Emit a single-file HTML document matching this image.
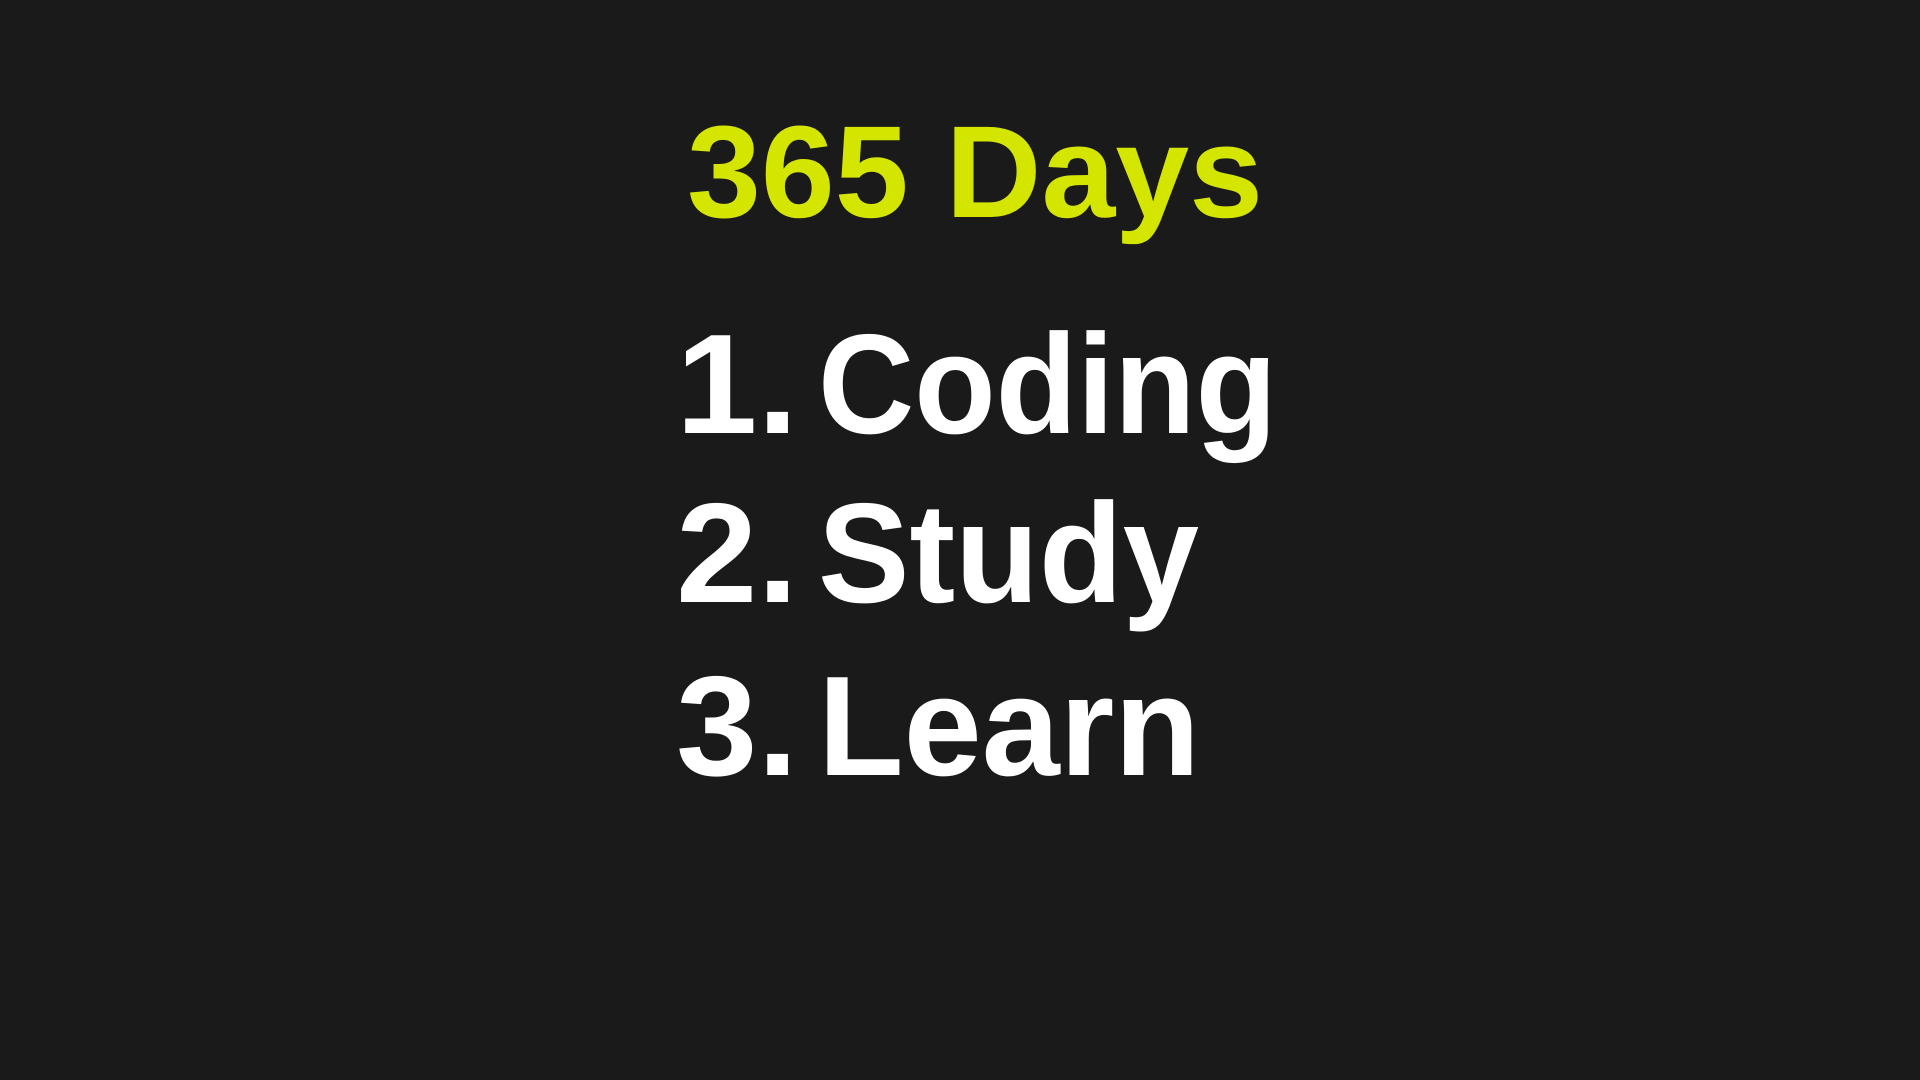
<!DOCTYPE html>
<html><head><meta charset="utf-8"><style>
html,body{margin:0;padding:0;background:#1a1a1a;width:1920px;height:1080px;overflow:hidden}
svg{display:block}
text{font-family:"Liberation Sans",sans-serif;font-weight:bold}
</style></head><body>
<svg width="1920" height="1080" viewBox="0 0 1920 1080">
<rect width="1920" height="1080" fill="#1a1a1a"/>
<text x="687" y="217" font-size="131" fill="#d4e600" textLength="576" lengthAdjust="spacingAndGlyphs">365 Days</text>
<g font-size="142" fill="#ffffff">
<text x="676" y="433" textLength="122" lengthAdjust="spacingAndGlyphs">1.</text><text x="818" y="433" textLength="459" lengthAdjust="spacingAndGlyphs">Coding</text>
<text x="676" y="602" textLength="122" lengthAdjust="spacingAndGlyphs">2.</text><text x="818" y="602" textLength="381" lengthAdjust="spacingAndGlyphs">Study</text>
<text x="676" y="775" textLength="122" lengthAdjust="spacingAndGlyphs">3.</text><text x="818" y="775" textLength="382" lengthAdjust="spacingAndGlyphs">Learn</text>
</g>
</svg>
</body></html>
